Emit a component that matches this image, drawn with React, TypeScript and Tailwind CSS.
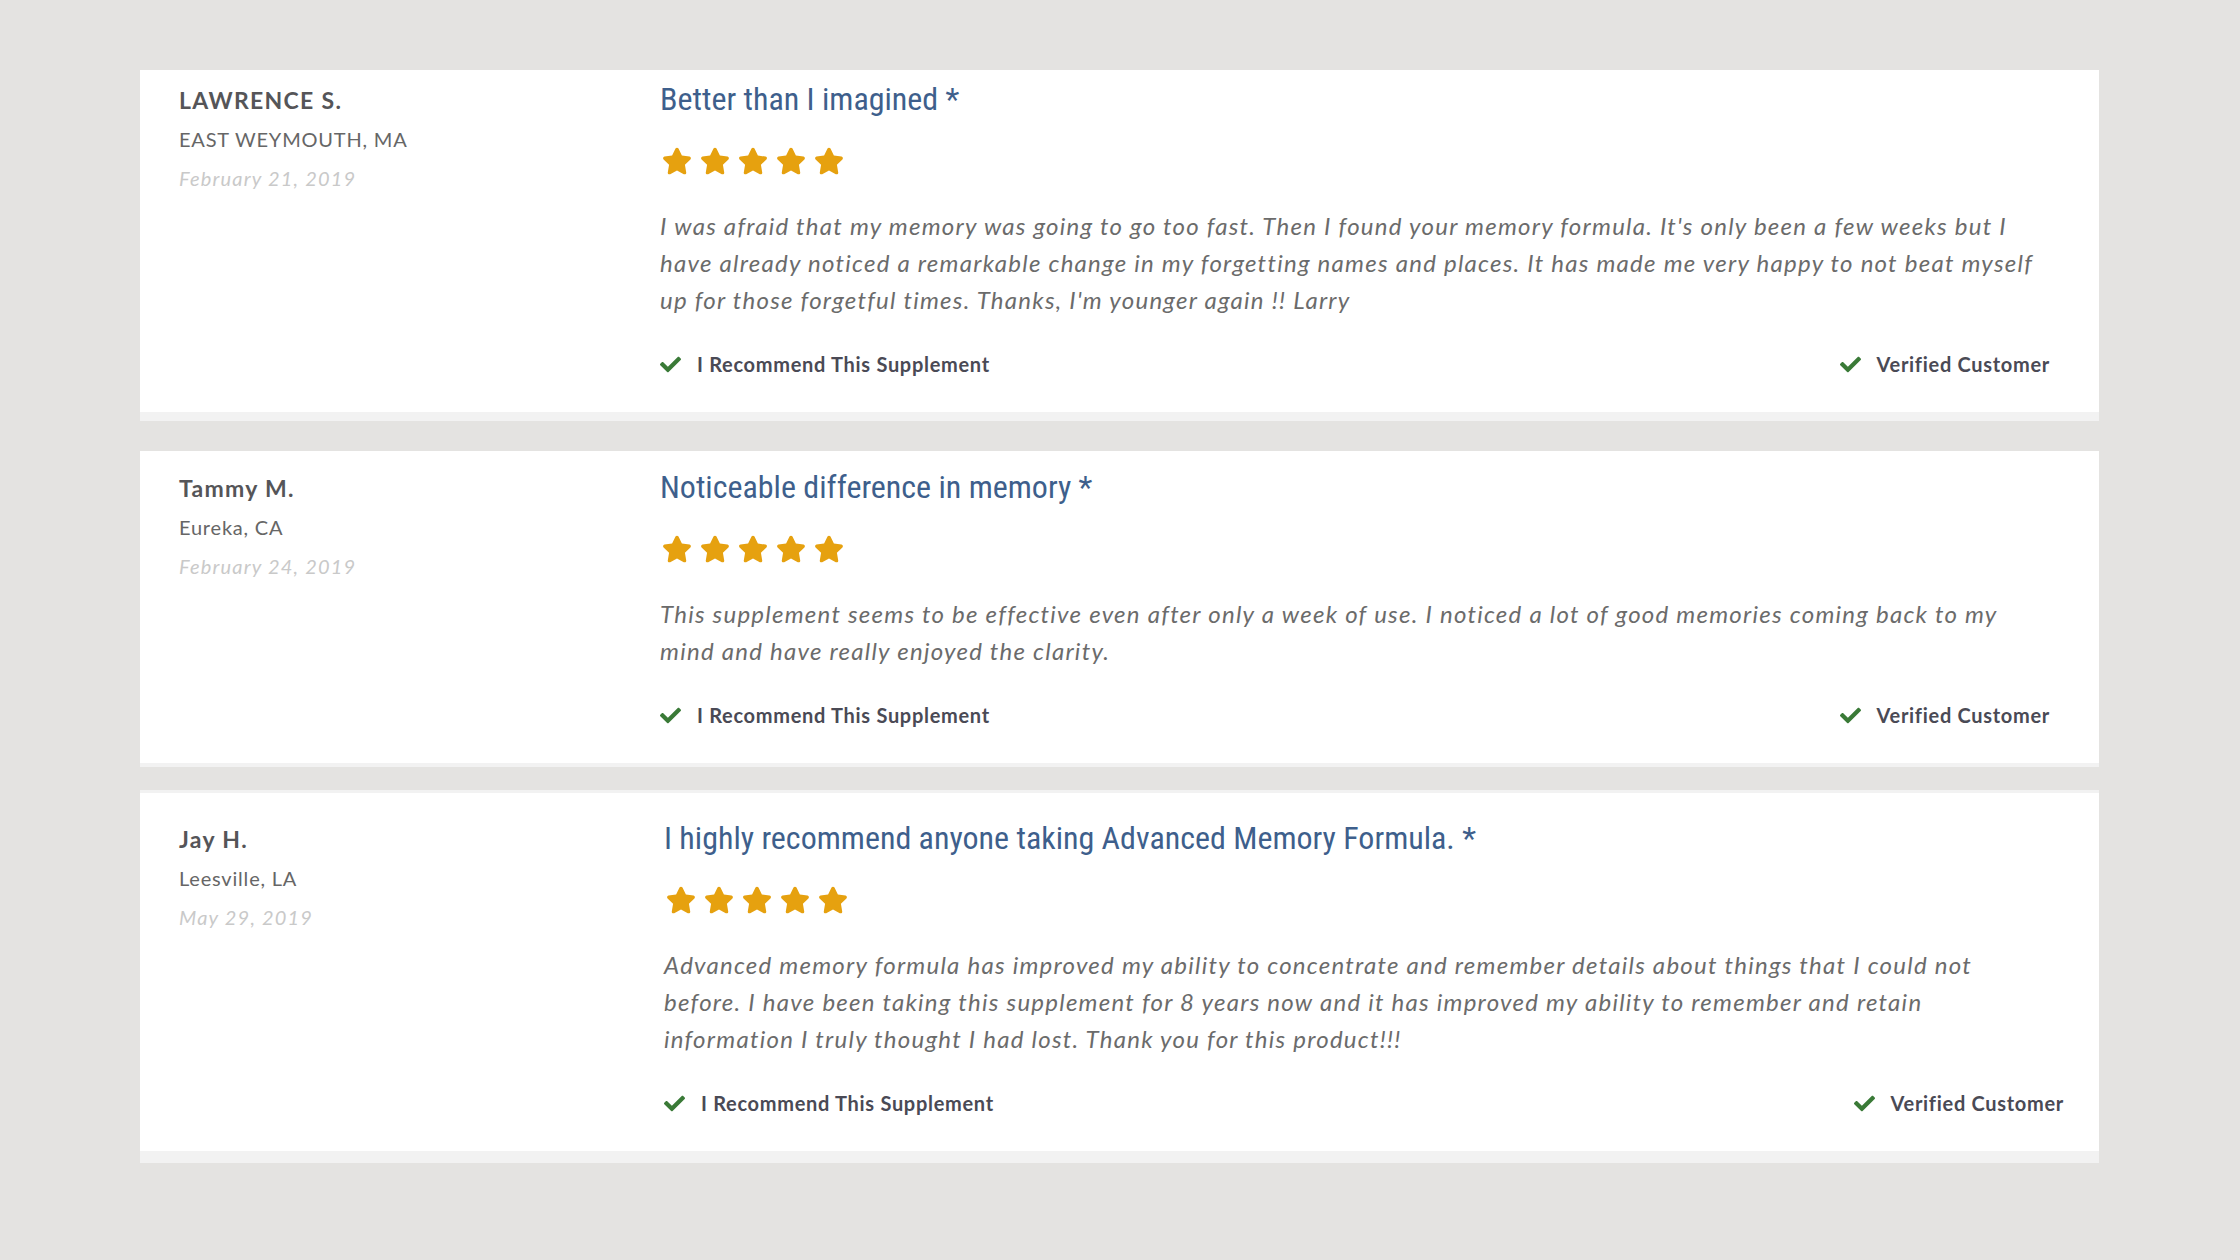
import { FaCheck, FaStar } from 'react-icons/fa';

interface Review {
  name: string;
  location: string;
  date: string;
  title: string;
  body: string;
  card: string;
  content: string;
  text: string;
}

const reviews: Review[] = [
  {
    name: 'LAWRENCE S.',
    location: 'EAST WEYMOUTH, MA',
    date: 'February 21, 2019',
    title: 'Better than I imagined *',
    body: "I was afraid that my memory was going to go too fast. Then I found your memory formula. It's only been a few weeks but I have already noticed a remarkable change in my forgetting names and places. It has made me very happy to not beat myself up for those forgetful times. Thanks, I'm younger again !! Larry",
    card: 'pt-[11px] border-b-[9px]',
    content: 'pr-[49px]',
    text: '',
  },
  {
    name: 'Tammy M.',
    location: 'Eureka, CA',
    date: 'February 24, 2019',
    title: 'Noticeable difference in memory *',
    body: 'This supplement seems to be effective even after only a week of use. I noticed a lot of good memories coming back to my mind and have really enjoyed the clarity.',
    card: 'pt-[18px] border-b-[4px]',
    content: 'pr-[49px]',
    text: '',
  },
  {
    name: 'Jay H.',
    location: 'Leesville, LA',
    date: 'May 29, 2019',
    title: 'I highly recommend anyone taking Advanced Memory Formula. *',
    body: 'Advanced memory formula has improved my ability to concentrate and remember details about things that I could not before. I have been taking this supplement for 8 years now and it has improved my ability to remember and retain information I truly thought I had lost. Thank you for this product!!!',
    card: 'pt-[27px] border-t-[3px] border-b-[12px]',
    content: 'pl-[4px] pr-[35px]',
    text: 'mr-[22px]',
  },
];

function Stars() {
  return (
    <div className="flex gap-[8px] text-[#e6a10f] pl-[2px]">
      {[0, 1, 2, 3, 4].map((i) => (
        <FaStar key={i} className="w-[30px] h-[30px]" />
      ))}
    </div>
  );
}

function Badge({ label }: { label: string }) {
  return (
    <div className="flex items-center gap-[16px] h-[24px]">
      <FaCheck className="w-[21px] h-[21px] text-[#3a7a37]" />
      <span className="text-[20px] tracking-[0.7px] font-bold text-[#4a4a55]">
        {label}
      </span>
    </div>
  );
}

function ReviewCard({ review }: { review: Review }) {
  return (
    <div
      className={`bg-white border-[#f2f2f2] flex pl-[39px] pb-[36px] ${review.card}`}
    >
      <div className="w-[481px] shrink-0">
        <div className="text-[23px] tracking-[1.3px] leading-[39px] font-bold text-[#555558]">
          {review.name}
        </div>
        <div className="text-[20px] tracking-[0.8px] leading-[39px] text-[#666]">
          {review.location}
        </div>
        <div className="text-[20px] tracking-[1.2px] leading-[39px] italic text-[#c9c9c9]">
          {review.date}
        </div>
      </div>
      <div className={`flex-1 min-w-0 ${review.content}`}>
        <h3
          className="text-[32px] leading-[36px] text-[#3e5f8c]"
          style={{ fontFamily: '"Roboto Condensed", "Liberation Sans Narrow", Roboto, sans-serif', fontStretch: 'condensed' }}
        >
          {review.title}
        </h3>
        <div className="mt-[29px]">
          <Stars />
        </div>
        <p className={`mt-[31px] text-[24px] tracking-[1.25px] leading-[37px] italic text-[#6b6b6b] ${review.text}`}>
          {review.body}
        </p>
        <div className="mt-[34px] flex justify-between">
          <Badge label="I Recommend This Supplement" />
          <Badge label="Verified Customer" />
        </div>
      </div>
    </div>
  );
}

export default function App() {
  return (
    <div className="min-h-[1260px] bg-[#e4e3e1] pt-[70px] px-[140px] font-['Lato',sans-serif]">
      <div className="w-[1959px] flex flex-col">
        <ReviewCard review={reviews[0]} />
        <div className="h-[30px]" />
        <ReviewCard review={reviews[1]} />
        <div className="h-[23px]" />
        <ReviewCard review={reviews[2]} />
      </div>
    </div>
  );
}
